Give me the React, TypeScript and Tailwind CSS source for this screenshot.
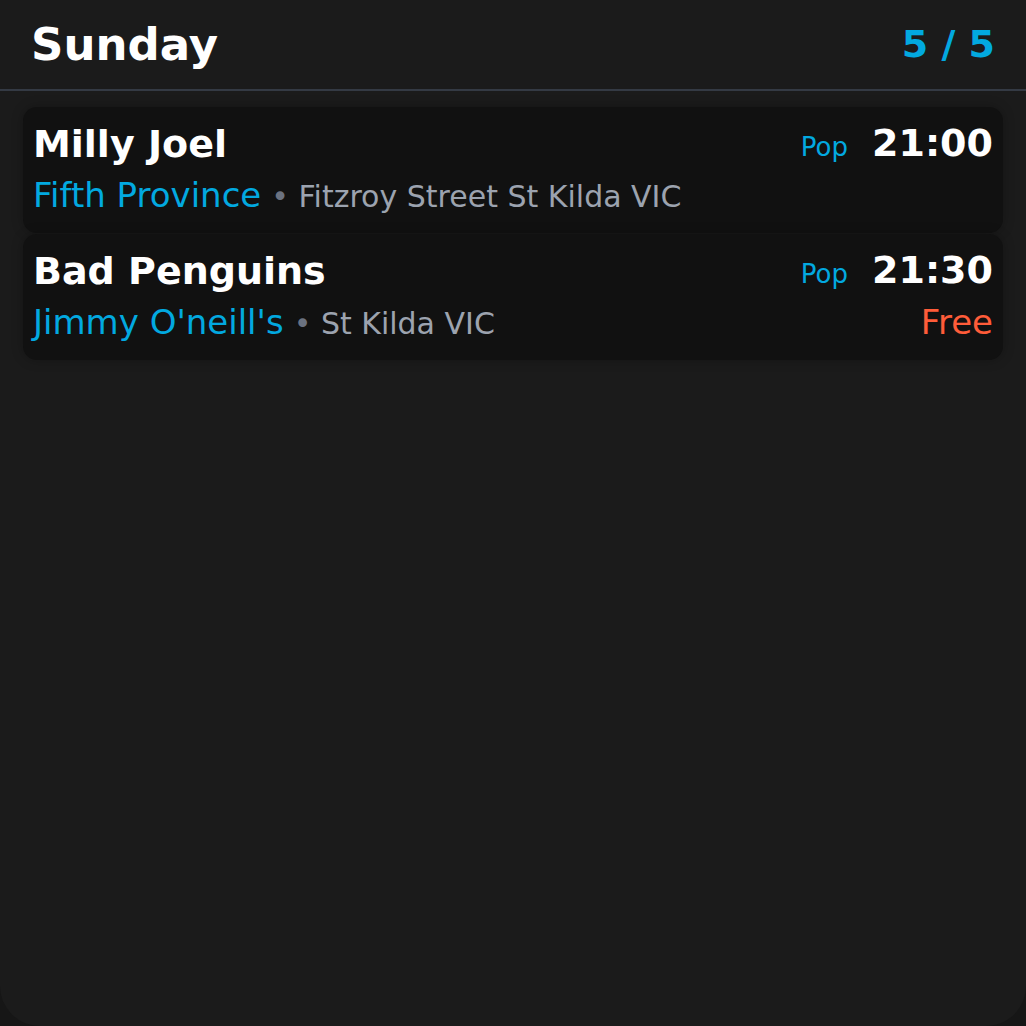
import React from 'react'

interface Gig {
  id: string
  artist: string
  venue: string
  address: string
  genre: string
  time: string
  price?: string
}

const gigs: Gig[] = [
  {
    id: 'milly-joel',
    artist: 'Milly Joel',
    venue: 'Fifth Province',
    address: 'Fitzroy Street St Kilda VIC',
    genre: 'Pop',
    time: '21:00',
  },
  {
    id: 'bad-penguins',
    artist: 'Bad Penguins',
    venue: "Jimmy O'neill's",
    address: 'St Kilda VIC',
    genre: 'Pop',
    time: '21:30',
    price: 'Free',
  },
]

function GigCard({ gig }: { gig: Gig }) {
  return (
    <div className="rounded-[14px] bg-[#111111] px-[10px] pt-[14px] pb-[16px] shadow-[0_0_12px_rgba(0,0,0,0.25)]">
      <div className="flex items-center justify-between">
        <span className="text-[38px] leading-[44px] font-bold text-white">{gig.artist}</span>
        <div className="flex items-baseline gap-[24px]">
          <span className="text-[26px] text-[#02a9e0]">{gig.genre}</span>
          <span className="text-[38px] leading-[44px] font-bold text-white">{gig.time}</span>
        </div>
      </div>
      <div className="mt-[8px] flex items-baseline justify-between">
        <div className="flex items-baseline gap-[10px]">
          <span className="text-[34px] leading-[40px] text-[#02a9e0]">{gig.venue}</span>
          <span className="text-[30px] leading-[40px] text-[#9ca3af]">
            <span className="text-[#6b7280]">•</span> {gig.address}
          </span>
        </div>
        {gig.price && (
          <span className="text-[34px] leading-[40px] text-[#ff5c39]">{gig.price}</span>
        )}
      </div>
    </div>
  )
}

export default function App() {
  return (
    <div className="h-[1026px] w-[1026px] bg-[#161616] font-['DejaVu_Sans',sans-serif]">
      <div className="h-full rounded-b-[40px] bg-[#1b1b1b]">
        {/* Header */}
        <div className="flex h-[91px] items-center justify-between border-b-2 border-[#343a44] px-[31px]">
          <h1 className="text-[45px] font-bold text-white">Sunday</h1>
          <span className="text-[38px] font-bold text-[#02a9e0]">5 / 5</span>
        </div>

        {/* Gig list */}
        <div className="flex flex-col gap-[1px] px-[23px] pt-[16px]">
          {gigs.map((gig) => (
            <GigCard key={gig.id} gig={gig} />
          ))}
        </div>
      </div>
    </div>
  )
}
